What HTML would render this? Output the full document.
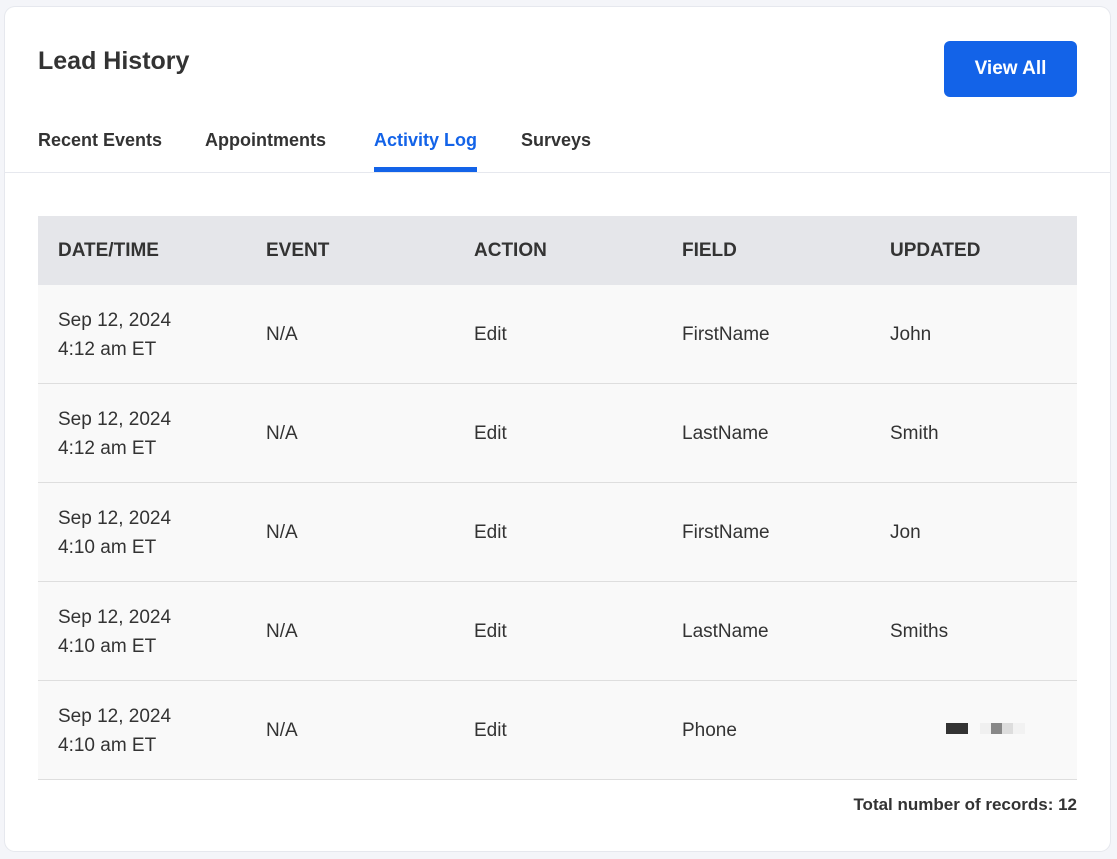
<!DOCTYPE html>
<html><head><style>
*{margin:0;padding:0;box-sizing:border-box}
body{width:1117px;height:859px;background:#f4f5f9;font-family:"Liberation Sans",sans-serif;color:#333;position:relative;overflow:hidden}
.card{position:absolute;left:5px;top:7px;width:1105px;height:844px;background:#fff;box-shadow:0 0 0 1px #e6e8ee;border-radius:10px}
.abs{position:absolute}
h1{position:absolute;left:33px;top:40px;font-size:25px;font-weight:bold;color:#333}
.btn{position:absolute;left:939px;top:34px;width:133px;height:56px;background:#1363e8;border-radius:6px;color:#fff;font-weight:bold;font-size:19px;text-align:center;line-height:56px}
.tab{position:absolute;top:123px;font-size:18px;font-weight:bold;color:#333}
.line{position:absolute;left:0;top:165px;width:1105px;height:1px;background:#e6e8ee}
.ul{position:absolute;left:369px;top:160px;width:103px;height:5px;background:#1363e8}
.th{position:absolute;left:33px;top:209px;width:1039px;height:69px;background:#e5e6ea}
.th span{position:absolute;top:24px;font-size:19px;font-weight:bold}
.row{position:absolute;left:33px;width:1039px;height:99px;background:#f9f9f9;border-bottom:1.5px solid #dedede}
.row span{position:absolute;font-size:19px;line-height:29px}
.foot{position:absolute;right:33px;top:788px;font-size:17px;font-weight:bold}
</style></head><body>
<div class="card">
<h1>Lead History</h1>
<div class="btn">View All</div>
<div class="tab" style="left:33px">Recent Events</div>
<div class="tab" style="left:200px">Appointments</div>
<div class="tab" style="left:369px;color:#1363e8">Activity Log</div>
<div class="tab" style="left:516px">Surveys</div>
<div class="line"></div><div class="ul"></div>
<div class="th"><span style="left:20px">DATE/TIME</span><span style="left:228px">EVENT</span><span style="left:436px">ACTION</span><span style="left:644px">FIELD</span><span style="left:852px">UPDATED</span></div>

<div class="row" style="top:278px"><span style="left:20px;top:21px">Sep 12, 2024<br>4:12 am ET</span><span style="left:228px;top:35px">N/A</span><span style="left:436px;top:35px">Edit</span><span style="left:644px;top:35px">FirstName</span><span style="left:852px;top:35px">John</span></div>
<div class="row" style="top:377px"><span style="left:20px;top:21px">Sep 12, 2024<br>4:12 am ET</span><span style="left:228px;top:35px">N/A</span><span style="left:436px;top:35px">Edit</span><span style="left:644px;top:35px">LastName</span><span style="left:852px;top:35px">Smith</span></div>
<div class="row" style="top:476px"><span style="left:20px;top:21px">Sep 12, 2024<br>4:10 am ET</span><span style="left:228px;top:35px">N/A</span><span style="left:436px;top:35px">Edit</span><span style="left:644px;top:35px">FirstName</span><span style="left:852px;top:35px">Jon</span></div>
<div class="row" style="top:575px"><span style="left:20px;top:21px">Sep 12, 2024<br>4:10 am ET</span><span style="left:228px;top:35px">N/A</span><span style="left:436px;top:35px">Edit</span><span style="left:644px;top:35px">LastName</span><span style="left:852px;top:35px">Smiths</span></div>
<div class="row" style="top:674px"><span style="left:20px;top:21px">Sep 12, 2024<br>4:10 am ET</span><span style="left:228px;top:35px">N/A</span><span style="left:436px;top:35px">Edit</span><span style="left:644px;top:35px">Phone</span>
<div class="abs" style="left:908px;top:42px;width:22px;height:11px;background:#333"></div>
<div class="abs" style="left:942px;top:42px;width:11px;height:11px;background:#f0f0f0"></div>
<div class="abs" style="left:953px;top:42px;width:11px;height:11px;background:#888"></div>
<div class="abs" style="left:964px;top:42px;width:11px;height:11px;background:#ddd"></div>
<div class="abs" style="left:975px;top:42px;width:12px;height:11px;background:#f2f2f2"></div>
</div>
<div class="foot">Total number of records: 12</div>
</div>
</body></html>
